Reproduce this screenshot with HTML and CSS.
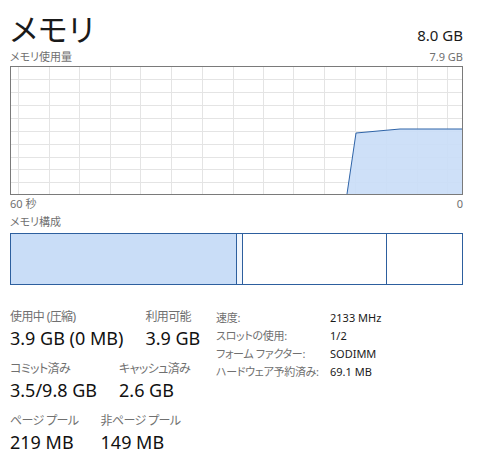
FILE: index.html
```html
<!DOCTYPE html>
<html lang="ja">
<head>
  <meta charset="UTF-8" />
  <title>メモリ</title>
  <link rel="stylesheet" href="styles.css">
</head>
<body>
  <div class="panel">
    <div class="head">
      <h1 class="title">メモリ</h1>
      <span class="total">8.0 GB</span>
    </div>
    <div class="caption">
      <span>メモリ使用量</span>
      <span>7.9 GB</span>
    </div>
    <svg class="graph" width="453" height="129" viewBox="0 0 453 129">
      <g stroke="#e4e4e4" stroke-width="1">
        <line x1="8.5" y1="0" x2="8.5" y2="129" />
        <line x1="39.5" y1="0" x2="39.5" y2="129" />
        <line x1="69.5" y1="0" x2="69.5" y2="129" />
        <line x1="100.5" y1="0" x2="100.5" y2="129" />
        <line x1="130.5" y1="0" x2="130.5" y2="129" />
        <line x1="161.5" y1="0" x2="161.5" y2="129" />
        <line x1="192.5" y1="0" x2="192.5" y2="129" />
        <line x1="223.5" y1="0" x2="223.5" y2="129" />
        <line x1="253.5" y1="0" x2="253.5" y2="129" />
        <line x1="283.5" y1="0" x2="283.5" y2="129" />
        <line x1="314.5" y1="0" x2="314.5" y2="129" />
        <line x1="345.5" y1="0" x2="345.5" y2="129" />
        <line x1="376.5" y1="0" x2="376.5" y2="129" />
        <line x1="407.5" y1="0" x2="407.5" y2="129" />
        <line x1="437.5" y1="0" x2="437.5" y2="129" />
        <line x1="0" y1="13.5" x2="453" y2="13.5" />
        <line x1="0" y1="26.5" x2="453" y2="26.5" />
        <line x1="0" y1="39.5" x2="453" y2="39.5" />
        <line x1="0" y1="52.5" x2="453" y2="52.5" />
        <line x1="0" y1="65.5" x2="453" y2="65.5" />
        <line x1="0" y1="78.5" x2="453" y2="78.5" />
        <line x1="0" y1="91.5" x2="453" y2="91.5" />
        <line x1="0" y1="103.5" x2="453" y2="103.5" />
        <line x1="0" y1="116.5" x2="453" y2="116.5" />
      </g>
      <polygon points="337,128 346,67 390,63 452,63 452,128" fill="#c9ddf7" fill-opacity="0.9" />
      <polyline points="337,128 346,67 390,63 452,63" fill="none" stroke="#2f64a8" stroke-width="1" />
      <rect x="0.5" y="0.5" width="452" height="128" fill="none" stroke="#7a7a7a" stroke-width="1" />
    </svg>
    <div class="axis">
      <span>60 秒</span>
      <span>0</span>
    </div>
    <div class="caption">メモリ構成</div>
    <div class="comp">
      <div class="seg seg-used"></div>
      <div class="seg seg-mod"></div>
      <div class="seg seg-standby"></div>
      <div class="seg seg-free"></div>
    </div>

    <div class="stats">
      <div class="stats-left">
        <div class="stat-row">
          <div class="stat">
            <div class="label">使用中 (圧縮)</div>
            <div class="value">3.9 GB (0 MB)</div>
          </div>
          <div class="stat">
            <div class="label">利用可能</div>
            <div class="value">3.9 GB</div>
          </div>
        </div>
        <div class="stat-row">
          <div class="stat">
            <div class="label">コミット済み</div>
            <div class="value">3.5/9.8 GB</div>
          </div>
          <div class="stat">
            <div class="label">キャッシュ済み</div>
            <div class="value">2.6 GB</div>
          </div>
        </div>
        <div class="stat-row">
          <div class="stat">
            <div class="label">ページ プール</div>
            <div class="value">219 MB</div>
          </div>
          <div class="stat">
            <div class="label">非ページ プール</div>
            <div class="value">149 MB</div>
          </div>
        </div>
      </div>
      <table class="specs">
        <tr><td class="key">速度:</td><td>2133 MHz</td></tr>
        <tr><td class="key">スロットの使用:</td><td>1/2</td></tr>
        <tr><td class="key">フォーム ファクター:</td><td>SODIMM</td></tr>
        <tr><td class="key">ハードウェア予約済み:</td><td>69.1 MB</td></tr>
      </table>
    </div>
  </div>
</body>
</html>
```

FILE: styles.css
```css
body {
  margin: 0;
  background: #fff;
  color: #1a1a1a;
  font-family: "Noto Sans", "Noto Sans CJK JP", sans-serif;
  font-feature-settings: "palt";
}
.panel {
  width: 453px;
  padding: 10px 0 0 10px;
}
.head {
  display: flex;
  justify-content: space-between;
  align-items: baseline;
  height: 38px;
}
.title {
  margin: 0;
  font-size: 31px;
  font-weight: normal;
  letter-spacing: 1px;
  line-height: 38px;
}
.total {
  font-size: 15px;
}
.caption {
  display: flex;
  justify-content: space-between;
  font-size: 11px;
  line-height: 18px;
  color: #707070;
}
.graph {
  display: block;
}
.axis {
  display: flex;
  justify-content: space-between;
  font-size: 11px;
  line-height: 18px;
  color: #707070;
}
.comp {
  display: flex;
  height: 50px;
  border: 1px solid #2d5f9e;
  margin-top: 2px;
}
.seg {
  border-right: 1px solid #2d5f9e;
}
.seg-used {
  width: 225px;
  background: #c9ddf7;
}
.seg-mod {
  width: 5px;
  background: #f1f6fd;
}
.seg-standby {
  width: 143px;
}
.seg-free {
  flex: 1;
  border-right: none;
}
.stats {
  display: flex;
  align-items: flex-start;
  margin-top: 24px;
}
.stats-left {
  width: 206px;
}
.stat-row {
  display: flex;
  gap: 22px;
  margin-bottom: 10px;
}
.label {
  font-size: 12px;
  line-height: 16px;
  letter-spacing: -0.6px;
  color: #707070;
}
.value {
  font-size: 18px;
  line-height: 26px;
  color: #111;
}
.specs {
  border-collapse: collapse;
  font-size: 11px;
}
.specs td {
  padding: 0;
  height: 18px;
  line-height: 18px;
}
.specs .key {
  width: 114px;
  letter-spacing: -0.3px;
  color: #707070;
}
```
